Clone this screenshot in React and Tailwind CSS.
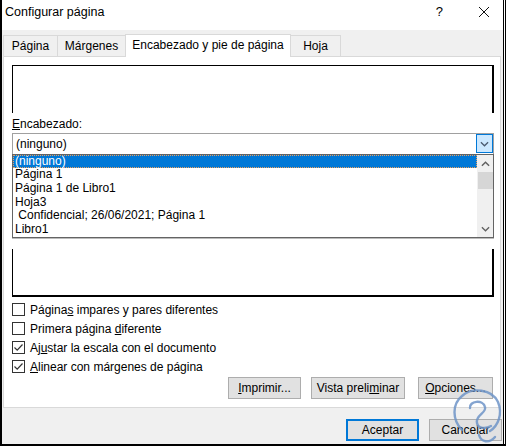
import React from 'react'

const ChevronDown = ({ className }) => (
    <svg viewBox="0 0 10 6" className={className} fill="none" stroke="currentColor" strokeWidth="1.4">
        <path d="M1 1 L5 5 L9 1" />
    </svg>
)

const ChevronUp = ({ className }) => (
    <svg viewBox="0 0 10 6" className={className} fill="none" stroke="currentColor" strokeWidth="1.6">
        <path d="M1 5 L5 1 L9 5" />
    </svg>
)

const Checkbox = ({ checked, children }) => (
    <div className="h-[19px] flex items-center">
        <div className="w-[13px] h-[13px] border border-[#333333] bg-white flex items-center justify-center">
            {checked && (
                <svg viewBox="0 0 11 11" className="w-[11px] h-[11px]" fill="none" stroke="#333333" strokeWidth="1.2">
                    <path d="M1.5 5.5 L4.2 8.2 L9.5 2.5" />
                </svg>
            )}
        </div>
        <span className="ml-[5px] leading-[16px]">{children}</span>
    </div>
)

const Button = ({ children, width, primary }) => (
    <div
        className={`${width} h-[22px] flex items-center justify-center bg-[#e1e1e1] ${primary ? 'border-2 border-[#0078d7]' : 'border border-[#adadad]'}`}
    >
        {children}
    </div>
)

const items = ['Página 1', 'Página 1 de Libro1', 'Hoja3', ' Confidencial; 26/06/2021; Página 1', 'Libro1']

const App = () => {
    return (
        <div className="relative w-[506px] h-[446px] border-l-2 border-b-2 border-r border-black text-[12px] text-black font-['Liberation_Sans',Arial,sans-serif] overflow-hidden">
            <div className="h-full border-r border-white">
                <div className="h-full border-r border-black bg-[#f0f0f0] flex flex-col">
                    {/* title bar */}
                    <div className="h-[30px] bg-white flex items-start pt-[4px] pl-[3px] shrink-0">
                        <span className="leading-[16px] text-[12.5px]">Configurar página</span>
                        <span className="ml-auto leading-[16px] text-[13px] mr-[36px]">?</span>
                        <svg viewBox="0 0 10 10" className="w-[10px] h-[10px] mt-[3px] mr-[14px]" stroke="#111" strokeWidth="1">
                            <path d="M0 0 L10 10 M10 0 L0 10" />
                        </svg>
                    </div>

                    {/* tabs */}
                    <div className="h-[26px] flex items-end pl-[1px] shrink-0">
                        <div className="w-[54px] h-[21px] border-t border-l border-[#d9d9d9] flex items-center justify-center leading-[16px]">Página</div>
                        <div className="w-[68px] h-[21px] border-t border-l border-[#d9d9d9] flex items-center justify-center leading-[16px]">Márgenes</div>
                        <div className="relative z-10 -mb-px w-[166px] h-[23px] bg-white border-t border-l border-r border-[#d9d9d9] flex items-center justify-center leading-[16px] pb-[2px]">
                            Encabezado y pie de página
                        </div>
                        <div className="w-[50px] h-[21px] border-t border-r border-[#d9d9d9] flex items-center justify-center leading-[16px]">Hoja</div>
                    </div>

                    {/* panel */}
                    <div className="ml-[1px] w-[498px] h-[352px] shrink-0 bg-white border border-[#d9d9d9] pl-[8px] pt-[8px] flex flex-col">
                        <div className="w-[482px] h-[48px] border-t border-l border-r-2 border-black" />

                        <div className="mt-[3px] leading-[16px]">
                            <u>E</u>ncabezado:
                        </div>

                        <div className="mt-[1px] w-[482px] h-[21px] border-t border-l border-r border-[#a0a0a0] flex items-start">
                            <span className="pl-[3px] pt-[2px] leading-[16px]">(ninguno)</span>
                            <div className="ml-auto w-[17px] h-[19px] border border-[#0078d7] bg-[#cce8ff] flex items-center justify-center text-[#4a5a70]">
                                <ChevronDown className="w-[9px] h-[6px]" />
                            </div>
                        </div>

                        {/* dropdown list */}
                        <div className="w-[482px] h-[84px] border border-[#646464] bg-white flex">
                            <div className="flex-1 flex flex-col">
                                <div className="h-[13px] bg-[#0078d7] text-white border border-dotted border-[#e8a060] leading-[11px] pl-[1px]">
                                    (ninguno)
                                </div>
                                {items.map((t, i) => (
                                    <div key={i} className="h-[13.8px] leading-[13.8px] pl-[2px] whitespace-pre">
                                        {t}
                                    </div>
                                ))}
                            </div>
                            <div className="w-[16px] bg-[#f0f0f0] flex flex-col items-center text-[#606060]">
                                <div className="h-[17px] flex items-center justify-center">
                                    <ChevronUp className="w-[9px] h-[6px]" />
                                </div>
                                <div className="w-[15px] h-[17px] bg-[#d6d6d6]" />
                                <div className="flex-1" />
                                <div className="h-[16px] flex items-center justify-center">
                                    <ChevronDown className="w-[9px] h-[6px]" />
                                </div>
                            </div>
                        </div>
                        <div className="w-[482px] h-px bg-[#bcbcbc]" />

                        <div className="mt-[10px] w-[482px] h-[48px] border-l border-r-2 border-b-2 border-black" />

                        <div className="mt-[3px] flex flex-col">
                            <Checkbox>Página<u>s</u> impares y pares diferentes</Checkbox>
                            <Checkbox>Primera página <u>d</u>iferente</Checkbox>
                            <Checkbox checked>Aj<u>u</u>star la escala con el documento</Checkbox>
                            <Checkbox checked><u>A</u>linear con márgenes de página</Checkbox>
                        </div>

                        <div className="mt-px flex justify-end pr-[7px] gap-[10px]">
                            <Button width="w-[73px]"><span><u>I</u>mprimir...</span></Button>
                            <div className="mr-[3px]">
                                <Button width="w-[94px]"><span>Vista preli<u>m</u>inar</span></Button>
                            </div>
                            <Button width="w-[75px]"><span><u>O</u>pciones...</span></Button>
                        </div>
                    </div>

                    {/* bottom buttons */}
                    <div className="flex-1 flex justify-end items-start pt-[11px] pr-[1px] gap-[10px]">
                        <Button width="w-[73px]" primary>Aceptar</Button>
                        <Button width="w-[73px]">Cancelar</Button>
                    </div>
                </div>
            </div>

            {/* watermark logo */}
            <svg viewBox="0 0 58 66" className="absolute left-[448px] top-[380px] w-[58px] h-[66px] pointer-events-none" fill="none" stroke="#6f95c8" strokeWidth="2.4" strokeLinecap="round" opacity="0.85">
                <path d="M12 50 C2 40 2 24 12 16 C22 7 42 9 48 22 C53 34 48 46 40 51" />
                <path d="M20 28 C19 21 33 19 35 27 C37 33 25 35 27 43 C28 49 36 49 41 46" />
                <path d="M29 55 C31 62 39 64 45 57" />
            </svg>
        </div>
    )
}

export default App
